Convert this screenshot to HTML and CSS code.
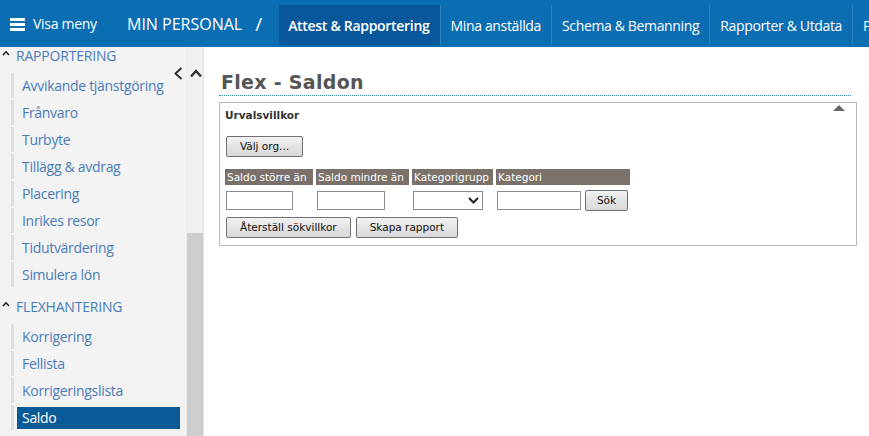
FILE: index.html
```html
<!DOCTYPE html>
<html lang="sv">
<head>
<meta charset="utf-8">
<title>Flex - Saldon</title>
<link rel="stylesheet" href="styles.css">
</head>
<body>
<header class="topbar">
  <div class="menu-btn">
    <svg class="burger" width="15" height="14" viewBox="0 0 15 14"><rect x="0" y="1" width="15" height="3" fill="#fff"/><rect x="0" y="6" width="15" height="3" fill="#fff"/><rect x="0" y="11" width="15" height="3" fill="#fff"/></svg>
    <span>Visa meny</span>
  </div>
  <div class="brand">MIN PERSONAL</div>
  <div class="slash">/</div>
  <nav class="tabs">
    <a class="tab active">Attest &amp; Rapportering</a>
    <a class="tab">Mina anställda</a>
    <a class="tab">Schema &amp; Bemanning</a>
    <a class="tab">Rapporter &amp; Utdata</a>
    <a class="tab">Personal</a>
  </nav>
</header>
<div class="layout">
  <aside class="sidebar">
    <div class="side-scroll">
      <div class="side-inner">
        <div class="group-head"><svg class="caret" width="8" height="6" viewBox="0 0 8 6"><polyline points="1,5 4,1.8 7,5" fill="none" stroke="#222" stroke-width="1.6"/></svg>RAPPORTERING</div>
        <ul class="items">
          <li><a>Avvikande tjänstgöring</a></li>
          <li><a>Frånvaro</a></li>
          <li><a>Turbyte</a></li>
          <li><a>Tillägg &amp; avdrag</a></li>
          <li><a>Placering</a></li>
          <li><a>Inrikes resor</a></li>
          <li><a>Tidutvärdering</a></li>
          <li><a>Simulera lön</a></li>
        </ul>
        <div class="group-head"><svg class="caret" width="8" height="6" viewBox="0 0 8 6"><polyline points="1,5 4,1.8 7,5" fill="none" stroke="#222" stroke-width="1.6"/></svg>FLEXHANTERING</div>
        <ul class="items">
          <li><a>Korrigering</a></li>
          <li><a>Fellista</a></li>
          <li><a>Korrigeringslista</a></li>
          <li class="current"><a>Saldo</a></li>
        </ul>
      </div>
    </div>
    <div class="scrollbar"><div class="thumb"></div></div>
    <div class="side-toggles">
      <svg width="9" height="13" viewBox="0 0 9 13"><polyline points="7.5,1 1.5,6.5 7.5,12" fill="none" stroke="#333" stroke-width="2"/></svg>
      <svg width="12" height="9" viewBox="0 0 12 9"><polyline points="1,7.5 6,2 11,7.5" fill="none" stroke="#333" stroke-width="2.4"/></svg>
    </div>
  </aside>
  <main class="main">
    <h1 class="page-title">Flex - Saldon</h1>
    <section class="panel">
      <div class="panel-head">
        <span class="panel-title">Urvalsvillkor</span>
        <span class="collapse"></span>
      </div>
      <div class="panel-body">
        <button class="btn org">Välj org...</button>
        <div class="filter">
          <div class="fh">Saldo större än</div>
          <div class="fh">Saldo mindre än</div>
          <div class="fh">Kategorigrupp</div>
          <div class="fh">Kategori</div>
          <div class="fc"><input class="inp w67" type="text"></div>
          <div class="fc"><input class="inp w68" type="text"></div>
          <div class="fc"><span class="sel"><svg width="11" height="7" viewBox="0 0 11 7"><polyline points="1,1 5.5,5.5 10,1" fill="none" stroke="#222" stroke-width="2"/></svg></span></div>
          <div class="fc"><input class="inp w84" type="text"><button class="btn sok">Sök</button></div>
        </div>
        <div class="actions">
          <button class="btn wide">Återställ sökvillkor</button>
          <button class="btn wide">Skapa rapport</button>
        </div>
      </div>
    </section>
  </main>
</div>
</body>
</html>
```
FILE: styles.css
```css
html, body {
  margin: 0;
  padding: 0;
  height: 100%;
  overflow: hidden;
  background: #fff;
}
body {
  font-family: "Open Sans", "Noto Sans", sans-serif;
}
.topbar {
  height: 47px;
  background: #0b6db2;
  display: flex;
  align-items: center;
  color: #fff;
  white-space: nowrap;
  overflow: hidden;
}
.topbar > * { flex-shrink: 0; }
.menu-btn {
  display: flex;
  align-items: center;
  padding-left: 10px;
  width: 105px;
  font-size: 14px;
  letter-spacing: -0.3px;
}
.burger { margin-right: 8px; }
.brand {
  font-size: 16px;
  margin-left: 12px;
}
.slash {
  font-size: 19px;
  margin: 0 17px 0 13px;
}
.tabs {
  display: flex;
  align-self: stretch;
}
.tab {
  flex-shrink: 0;
  display: flex;
  align-items: center;
  padding: 0 10px;
  font-size: 14px;
  letter-spacing: -0.35px;
  border-left: 1px solid rgba(255,255,255,0.14);
  margin: 5px 0 2px;
}
.tab.active {
  background: #08579b;
  border-left: 0;
  padding: 0 10px 0 9px;
  font-weight: 600;
  letter-spacing: -0.3px;
}

.layout {
  display: grid;
  grid-template-columns: 204px 1fr;
  height: calc(100% - 47px);
}
.sidebar {
  position: relative;
  display: flex;
  background: #f3f3f3;
  border-right: 1px solid #e2e2e2;
  overflow: hidden;
}
.side-scroll {
  width: 187px;
  overflow: hidden;
}
.side-inner {
  margin-top: -7px;
}
.group-head {
  height: 30px;
  color: #4a7bb9;
  font-size: 14px;
  letter-spacing: -0.2px;
  padding-left: 2px;
  display: flex;
  align-items: center;
}
.caret {
  margin: 0 6px 4px 0;
}
.items {
  list-style: none;
  margin: 0;
  padding: 3px 0 2px;
}
.items li {
  height: 25px;
  margin: 0 0 2px 11px;
  border-left: 3px solid #dedede;
  display: flex;
  align-items: center;
}
.items a {
  display: block;
  width: 163px;
  height: 22px;
  line-height: 22px;
  margin-left: 3px;
  padding-left: 5px;
  color: #4a7bb9;
  font-size: 14px;
  letter-spacing: -0.3px;
  box-sizing: border-box;
}
.items li.current a {
  background: #0a5a98;
  color: #fff;
}
.scrollbar {
  width: 16px;
  background: #f0f0f0;
  border-left: 1px solid #ececec;
}
.thumb {
  margin-top: 186px;
  height: 400px;
  background: #cdcdcd;
}
.side-toggles {
  position: absolute;
  top: 20px;
  left: 174px;
  display: flex;
  align-items: center;
  gap: 7px;
}

.main {
  padding: 22px 12px 0 15px;
  font-family: "DejaVu Sans", Verdana, sans-serif;
}
.page-title {
  margin: 0 6px 0 0;
  font-size: 19px;
  letter-spacing: 0.3px;
  font-weight: bold;
  color: #555;
  padding: 2px 0 2px 2px;
  border-bottom: 1px dotted #2c8fae;
  line-height: 22px;
}
.panel {
  margin-top: 6px;
  border: 1px solid #b9b9b9;
  height: 144px;
  box-sizing: border-box;
}
.panel-head {
  display: flex;
  justify-content: space-between;
  padding: 2px 11px 0 5px;
  height: 22px;
  box-sizing: border-box;
}
.panel-title {
  font-weight: bold;
  font-size: 10.5px;
  color: #333;
  margin-top: 4px;
}
.collapse {
  width: 0;
  height: 0;
  border-left: 6px solid transparent;
  border-right: 6px solid transparent;
  border-bottom: 6px solid #666;
}
.panel-body {
  padding: 10px 5px 0 6px;
}
.btn {
  font-family: "DejaVu Sans", Verdana, sans-serif;
  font-size: 10.5px;
  color: #111;
  height: 21px;
  padding: 0 9px;
  border: 1px solid #707070;
  border-radius: 2px;
  background: linear-gradient(#f2f2f2, #e4e4e4 50%, #d9d9d9);
}
.btn.org { width: 77px; }
.btn.wide { padding: 0 13px; }
.filter {
  display: grid;
  grid-template-columns: 88px 93px 81px 134px;
  column-gap: 3px;
  margin: 12px 0 0 -1px;
}
.fh {
  background: #7a716b;
  color: #fff;
  font-size: 10.5px;
  height: 16px;
  line-height: 16px;
  padding-left: 2px;
  white-space: nowrap;
  overflow: hidden;
}
.fc {
  display: flex;
  align-items: flex-start;
  padding-top: 6px;
}
.inp {
  height: 19px;
  box-sizing: border-box;
  border: 1px solid #8c8c8c;
  margin: 0 0 0 1px;
  padding: 0;
}
.w67 { width: 67px; }
.w68 { width: 68px; }
.w84 { width: 84px; }
.sel {
  width: 70px;
  height: 19px;
  box-sizing: border-box;
  border: 1px solid #8c8c8c;
  margin-left: 1px;
  display: flex;
  justify-content: flex-end;
  align-items: center;
  padding-right: 3px;
}
.btn.sok {
  margin: -1px 0 0 4px;
  width: 43px;
  padding: 0;
}
.actions {
  display: flex;
  gap: 5px;
  margin-top: 6px;
}
```
